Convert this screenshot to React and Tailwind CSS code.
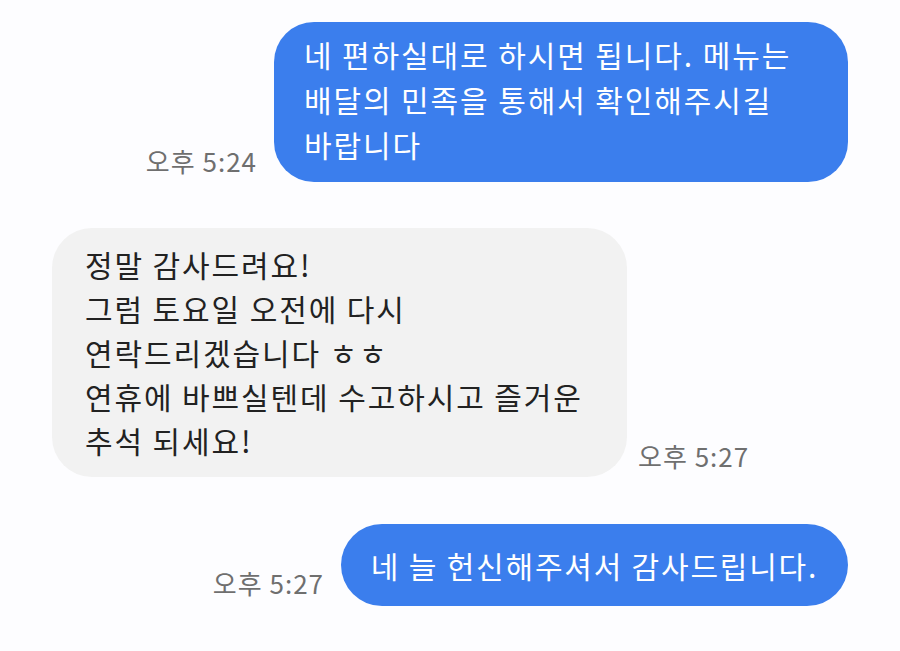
const font = { fontFamily: '"Noto Sans CJK KR", "Noto Sans", sans-serif' };

function Time({ children, className = "" }) {
  return (
    <div className={`shrink-0 whitespace-nowrap text-[26px] leading-[34px] tracking-[1px] text-[#6f6f6f] ${className}`}>
      {children}
    </div>
  );
}

function Lines({ lines }) {
  return lines.map((l, i) => (
    <div key={i} className="whitespace-nowrap">
      {l}
    </div>
  ));
}

export default function App() {
  return (
    <div
      className="min-h-[651px] w-full bg-[#fdfdff] px-[52px] pt-[22px] overflow-hidden"
      style={font}
    >
      {/* outgoing 1 */}
      <div className="flex items-end justify-end gap-[17px]">
        <Time className="mb-[4px]">오후 5:24</Time>
        <div className="w-[574px] rounded-[40px] bg-[#3b7eed] pl-[30px] pr-[20px] pt-[10px] pb-[15px] text-[30px] leading-[45px] tracking-[1.9px] text-white">
          <Lines
            lines={[
              "네 편하실대로 하시면 됩니다. 메뉴는",
              "배달의 민족을 통해서 확인해주시길",
              "바랍니다",
            ]}
          />
        </div>
      </div>

      {/* incoming */}
      <div className="mt-[46px] flex items-end justify-start gap-[11px]">
        <div className="w-[575px] rounded-[40px] bg-[#f2f2f2] pl-[33px] pr-[20px] pt-[14px] pb-[15px] text-[30px] leading-[44px] tracking-[1.9px] text-[#222222]">
          <Lines
            lines={[
              "정말 감사드려요!",
              "그럼 토요일 오전에 다시",
              "연락드리겠습니다 ㅎㅎ",
              "연휴에 바쁘실텐데 수고하시고 즐거운",
              "추석 되세요!",
            ]}
          />
        </div>
        <Time className="mb-[4px]">오후 5:27</Time>
      </div>

      {/* outgoing 2 */}
      <div className="mt-[47px] flex items-end justify-end gap-[17px]">
        <Time className="mb-[6px]">오후 5:27</Time>
        <div className="flex h-[82px] w-[507px] items-center justify-center rounded-full bg-[#3b7eed] text-[30px] leading-[45px] tracking-[1.8px] text-white">
          <span className="whitespace-nowrap">네 늘 헌신해주셔서 감사드립니다.</span>
        </div>
      </div>
    </div>
  );
}
